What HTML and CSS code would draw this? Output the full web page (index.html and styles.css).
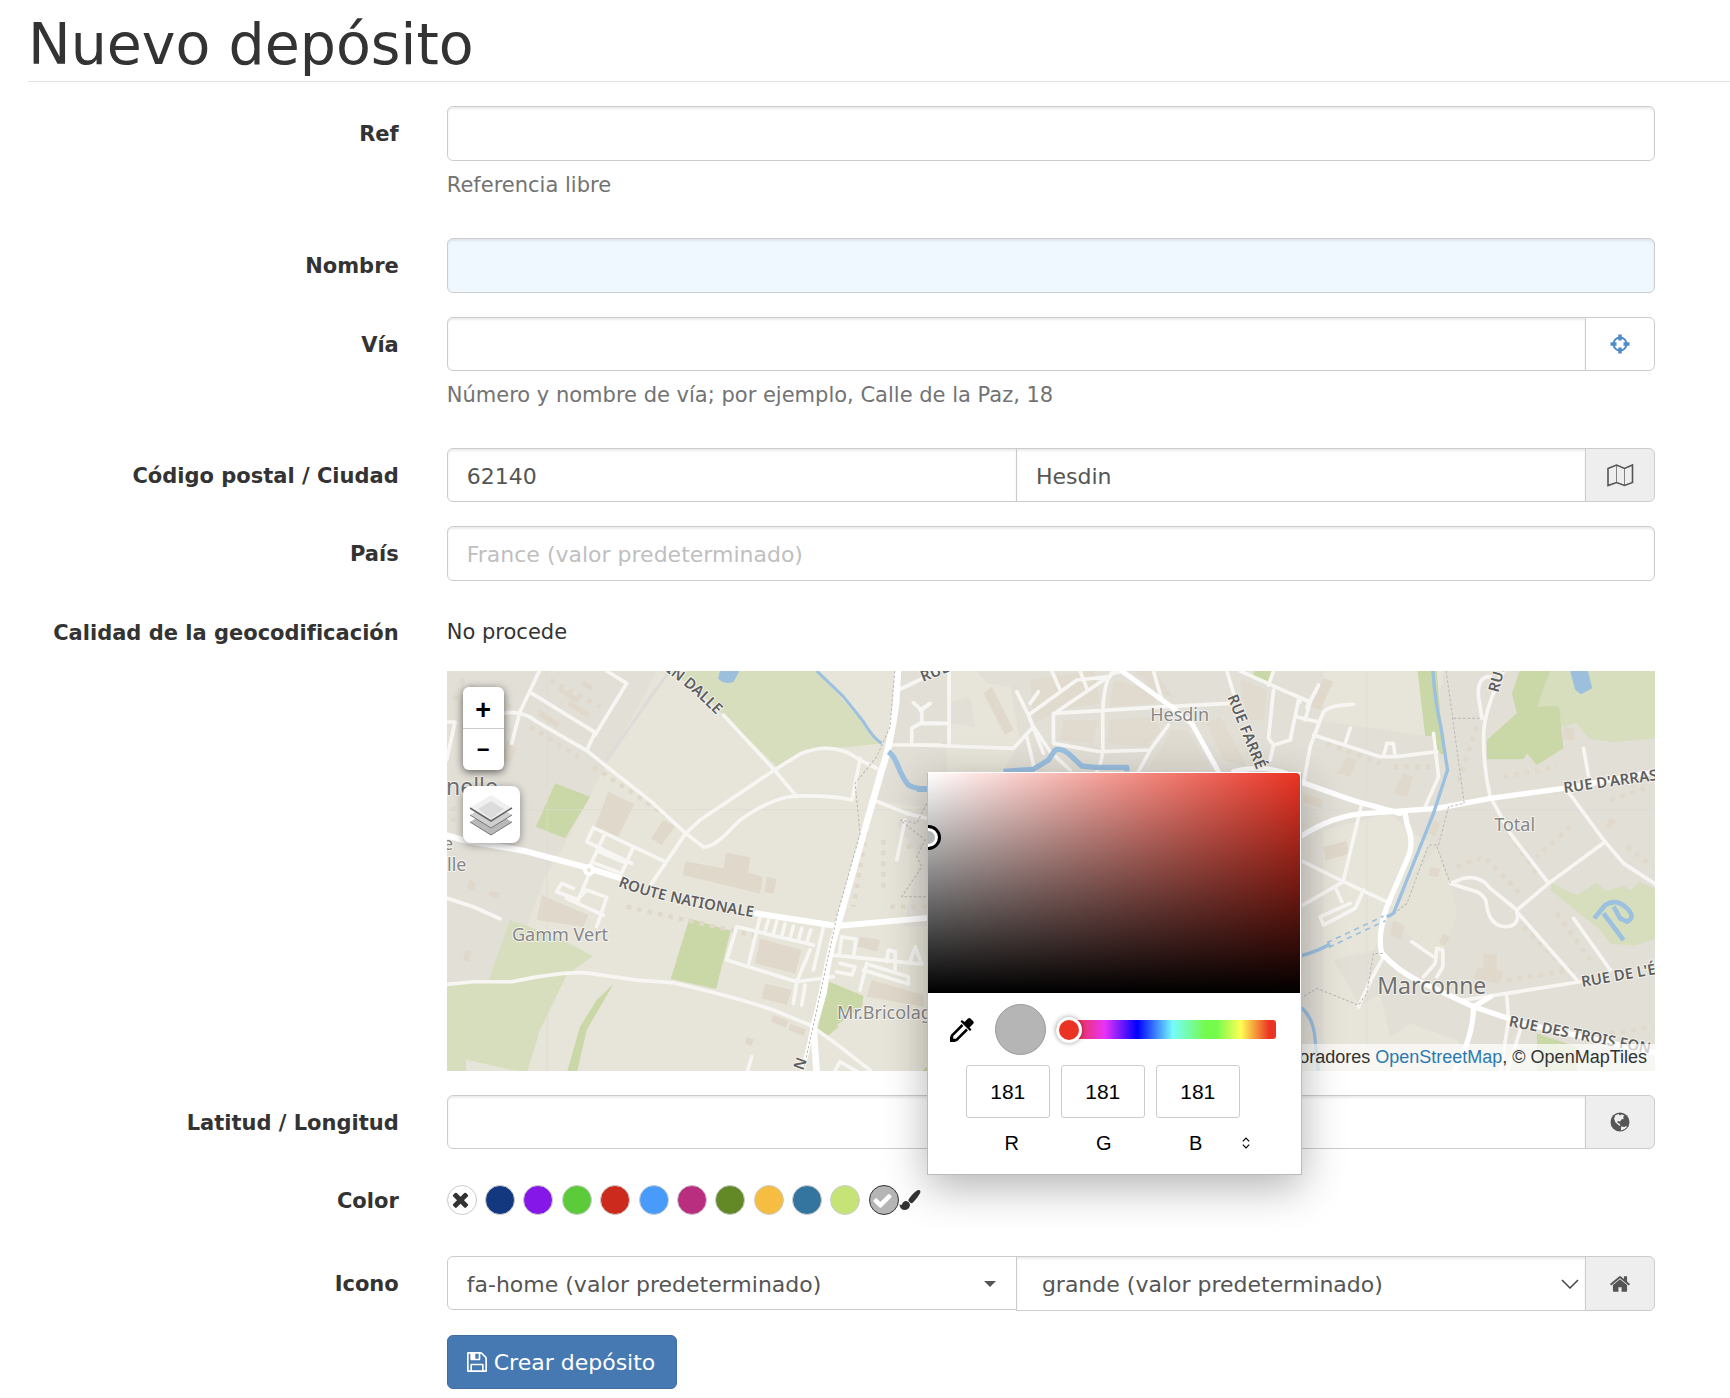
FILE: index.html
```html
<!DOCTYPE html>
<html lang="es">
<head>
<meta charset="utf-8">
<meta name="viewport" content="width=device-width, initial-scale=1">
<title>Nuevo depósito</title>
<link rel="stylesheet" href="styles.css">
</head>
<body>

<h1 class="page-header">Nuevo depósito</h1>

<form class="form">

  <div class="form-group">
    <label class="control-label" for="ref">Ref</label>
    <div class="controls">
      <input type="text" class="form-control" id="ref">
      <p class="help-block">Referencia libre</p>
    </div>
  </div>

  <div class="form-group">
    <label class="control-label" for="name">Nombre</label>
    <div class="controls">
      <input type="text" class="form-control required" id="name">
    </div>
  </div>

  <div class="form-group">
    <label class="control-label" for="street">Vía</label>
    <div class="controls">
      <div class="input-group">
        <input type="text" class="form-control" id="street">
        <button type="button" class="addon addon-button" aria-label="Localizar">
          <svg width="20" height="20" viewBox="0 0 20 20" fill="none" stroke="currentColor">
            <circle cx="10" cy="10" r="6.500" stroke-width="2"/>
            <path d="M10 0.500v6M10 13.500v6M0.500 10h6M13.500 10h6" stroke-width="3.500"/>
          </svg>
        </button>
      </div>
      <p class="help-block">Número y nombre de vía; por ejemplo, Calle de la Paz, 18</p>
    </div>
  </div>

  <div class="form-group">
    <label class="control-label" for="postalcode">Código postal / Ciudad</label>
    <div class="controls">
      <div class="input-group">
        <input type="text" class="form-control" id="postalcode" value="62140">
        <input type="text" class="form-control" id="city" value="Hesdin" aria-label="Ciudad">
        <span class="addon">
          <svg width="28" height="24" viewBox="0 0 28 24" fill="none" stroke="currentColor">
            <path d="M2 5.500L10.500 2L18.500 5.500L26.500 2V19.500L18.500 22.500L10.500 19.500L2 22.500Z" stroke-width="1.600"/>
            <path d="M10.500 2v17.500M18.500 5.500v17" stroke-width="1" opacity=".7"/>
          </svg>
        </span>
      </div>
    </div>
  </div>

  <div class="form-group">
    <label class="control-label" for="country">País</label>
    <div class="controls">
      <input type="text" class="form-control" id="country" placeholder="France (valor predeterminado)">
    </div>
  </div>

  <div class="form-group">
    <span class="control-label">Calidad de la geocodificación</span>
    <div class="controls">
      <p class="form-static">No procede</p>
      <div class="map">
        <svg class="map-canvas" viewBox="0 0 1208 400" preserveAspectRatio="xMinYMin slice">
          <rect width="1208" height="400" fill="#e7e5d9"/>

          <!-- west -->
          <g transform="translate(-7 -11) scale(.33333)">
            <path class="town" d="M0 0H670L500 310L440 430L370 560L320 640L260 800L210 790L145 965L0 970Z"/>
            <path class="town" d="M1380 0H1520V800H1390L1440 600L1370 490L1440 440L1300 420L1340 260Z"/>
            <path class="park" d="M690 33H1128L1200 110L1270 190L1325 250L1220 262Q1110 262 1010 320L860 175Q790 100 690 33Z"/>
            <path class="park" d="M210 780L350 830L458 888L380 945L300 1110L260 1240L78 1198V1240H0V975L145 965Z"/>
            <path class="field" d="M345 370L450 410L375 535L288 500Z"/>
            <path class="field" d="M748 775L872 812L828 987L692 957Z"/>
            <path class="field" d="M1168 965L1270 1008L1266 1040L1190 1095L1196 1100L1160 1130L1132 1110Z"/>
            <path class="field" d="M520 972L440 1110L410 1240H380L420 1100L470 1020Z"/>
            <path class="field" d="M1445 1235L1500 1180V1240H1445Z"/>
            <g class="building">
              <path d="M505 395L582 432L535 530L465 500Z"/>
              <path d="M735 604L850 625L858 578L930 592L925 638L968 650L960 700L728 645Z"/>
              <path d="M980 650l30 8l-10 44l-26-6Z"/>
              <path d="M305 705L445 765L430 800L290 780Z"/>
              <path d="M960 835L1085 870L1065 940L945 910Z"/>
              <path d="M975 970L1055 990L1040 1035L965 1015Z"/>
              <path d="M1295 960L1450 1005V1040L1280 1010Z"/>
              <path d="M1260 830l60 10l-8 34l-60-14ZM670 480l35 18l-40 58l-32-22Z"/>
              <path d="M90 660l20 10l-10 20l-20-8ZM150 692l30 6l-6 16l-28-6ZM920 1130l22 8l-8 20l-18-8ZM1000 1065l45 18l-8 20l-45-18ZM1050 1090l48 18l-8 20l-45-18ZM75 870l18 4l-6 30l-18-4Z"/>
              <path d="M200 240l30 30l-20 40l-25-10ZM390 120l60 40l-8 14l-60-38ZM300 150l60 40l-8 14l-60-38ZM360 80l60 36l-8 14l-60-36ZM430 60l30 18l-8 14l-30-18Z"/>
            </g>
            <path class="building-row" d="M60 60L230 150M40 110L210 210M330 60L480 140M270 200L430 300M460 320L700 480M40 440V500M330 590L420 620M560 740L960 830M1290 450L1240 740M1330 540V700M1400 560H1480M1350 740H1460"/>
            <path class="grid" d="M322 33V1240M21 449H1470"/>
            <g class="road minor">
              <path d="M298 33L240 155L215 250M272 98L465 217L440 272M500 33L560 70L465 225M0 186H45L20 300M190 160Q250 150 290 185L440 272L520 335L640 430L737 520L790 560Q810 565 850 530L900 480Q1000 410 1070 408Q1170 405 1236 420L1260 295"/>
              <path d="M850 165L1003 330L1070 410M737 520L780 480L1003 330L1080 282Q1180 240 1260 300L1310 325M737 520L635 670M1300 420L1400 460L1480 480"/>
              <path d="M440 545L460 503L580 560L675 605M495 520L440 640M440 545L575 610M478 575L560 610M580 560L545 640L465 610"/>
              <path d="M448 640L415 720L350 695L365 670L400 685M415 715L440 690L500 712L470 800M380 715L490 765"/>
              <path d="M0 708L100 740L180 776M0 975L100 965L215 965Q390 930 450 940L590 960L700 968Q900 1015 1000 1050L1110 1095L1200 1160L1290 1230M920 1240L935 1190"/>
              <path d="M890 800L860 900L1070 965L1110 870M960 770L925 915M890 800L1120 855M1150 800L1120 930M985 780L975 815M1010 785L1000 820M1035 790L1025 828M1060 798L1050 835M1085 805L1075 840M1112 810L1100 848M1070 965L1060 1030M1095 975L1085 1035M1070 965L1180 950"/>
              <path d="M1180 885L1445 912L1425 860L1410 905M1205 830L1248 838L1240 890M1205 830L1198 880M1340 905L1345 870L1365 875V930M1280 910L1260 990M1270 930L1405 972V950L1290 915M1200 910L1245 920L1235 945L1190 935M1180 1240L1200 1205L1260 1240"/>
              <path d="M1375 90L1500 30M1340 255H1500M1415 245V205L1440 190H1500M1445 190V150L1420 128M1445 150L1470 130M1395 480L1370 600"/>
            </g>
            <path class="road main" d="M0 520L70 540L250 572L430 620L560 660M950 760L1190 798L1480 772" stroke-width="18"/>
            <circle cx="447" cy="630" r="12" fill="#e7e5d9" stroke="#fff" stroke-width="12"/>
            <path class="road main" d="M1374 20L1368 130Q1350 260 1325 330L1265 540L1195 790Q1160 900 1150 1000L1120 1100L1130 1240" stroke-width="20"/>
            <path class="road main" d="M1190 810L1150 960L1105 1160L1085 1240" stroke-width="12"/>
            <path class="rail" d="M1364 33L1350 200L1310 290L1245 370L1260 520L1190 770L1130 1050L1090 1230M1460 430L1430 490L1380 480L1455 540L1430 590L1445 620L1385 710H1460"/>
            <path class="rail light" d="M690 33L640 100L500 300"/>
            <path class="water" d="M840 33H898L880 66Q850 75 834 55Z"/>
            <path class="river" d="M1130 33L1210 110L1270 185Q1300 235 1325 250" stroke-width="9"/>
            <path class="river" d="M1345 275Q1360 285 1370 310Q1390 360 1405 375Q1430 390 1470 385" stroke-width="16"/>
          </g>

          <!-- town centre, mostly under the colour picker -->
          <g transform="translate(473 -11) scale(.33333)">
            <path class="town" d="M170 33H1210V1240H1146V700L250 330L300 250L270 80L200 70Z"/>
            <path class="town" d="M80 130L150 110L165 200L90 190Z"/>
            <g class="building">
              <path d="M190 100L215 80L280 210L255 225Z"/>
              <path d="M330 60L520 33L540 130L420 150L340 190Z" opacity=".7"/>
              <path d="M430 180L530 180L520 250L420 240Z" opacity=".7"/>
              <path d="M580 60L720 100L700 130L570 140Z" opacity=".7"/>
              <path d="M570 180L700 170L720 210L680 260L560 250Z" opacity=".7"/>
              <path d="M750 210L800 210L870 320H690Z" opacity=".6"/>
              <path d="M640 33H700L760 110L710 100ZM860 190L900 170L980 320L910 300Z" opacity=".7"/>
              <path d="M960 60L1040 90L1030 180L980 180Z" opacity=".7"/>
            </g>
            <path class="field" d="M1005 33H1060L1045 72L995 50Z"/>
            <g class="road minor">
              <path d="M87 33V255M0 255L280 265L340 200L390 275L450 330M290 95L325 165L370 280M325 165L470 60L570 50M330 130L355 95M395 33L420 90M480 33L500 85M410 155L580 40L610 33M580 33Q550 60 548 160V270Q545 310 530 335M400 165V250L540 275L690 270L745 195M400 160L740 140L930 130M700 33L725 120M690 270L655 335M345 335L320 230"/>
              <path d="M920 33L940 100M960 33L1165 125L1150 190M1060 33L1045 75M1060 90L1045 235L1060 255L1110 240L1140 120M1130 170L1195 185M1195 80L1165 130M1050 300L1060 255M0 150L30 130M0 190H80"/>
            </g>
            <path class="road main" d="M605 33L760 145L815 190L895 335M940 335Q1040 310 1120 350L1210 380" stroke-width="15"/>
            <path class="river" d="M-10 388H30M250 334L340 328L385 300L405 270Q425 262 450 285L485 318L525 322H620V334" stroke-width="16"/>
          </g>

          <!-- east -->
          <g transform="translate(843 -11) scale(.33333)">
            <path class="town" d="M0 100L80 180L430 230L460 33H1100V1240H560L500 1140L360 1090L300 1130L270 1000L210 1040L130 900L250 870L300 770L420 550L345 500L300 460L30 530Z"/>
            <path class="park" d="M780 33H1100V235L970 246L895 236L860 190L815 200L740 140Z"/>
            <path class="field" d="M688 33H780L740 140L800 138Q812 145 810 180L820 265L740 315L710 280L700 298H590V240L680 160L665 100Z"/>
            <path class="field" d="M382 33H440L460 285L430 270L425 228H405Z"/>
            <path class="park" d="M785 670L860 705L920 668L945 692L1000 678L1020 690L1050 665L1100 690V835L1035 856L960 850L930 810L780 690Z"/>
            <path class="field" d="M740 1120L860 1160V1240H740Z"/>
            <path class="open" d="M440 560L480 680L500 760L450 900L400 860L300 780L380 640Z"/>
            <g class="building">
              <path d="M580 882L620 884V930L640 935L628 970L550 955L560 925L580 920Z"/>
              <path d="M310 780L345 800L330 840L300 822ZM460 820l18 10l-14 28l-18-10Z"/>
              <path d="M100 55L130 65L90 150L62 140Z"/>
              <path d="M820 200L852 205L850 240L820 238Z"/>
              <path d="M340 340L370 350L350 410L310 400ZM170 290L200 300L180 350L140 340Z"/>
              <path d="M430 480L450 490L435 530L415 520ZM960 475l18 8l-18 24l-14-8Z"/>
              <path d="M100 560l70-18l6 40l-70 20ZM420 620l30 6l-8 26l-28-6ZM40 400l60 20l-6 24l-58-20Z"/>
            </g>
            <path class="building-row" d="M110 250L270 310M310 320H420M640 350L800 320M500 620L580 590L700 710M620 470L740 640M840 500L740 590M700 800L830 930M800 760L900 900M650 960L850 930M640 1150L700 1200M1010 560L1090 620M560 200L500 380M960 420L1080 380M960 1120L1090 1100"/>
            <path class="grid" d="M230 33V1240M37 449H1100"/>
            <g class="road minor">
              <path d="M0 100L60 125L85 75M25 120L0 240M60 125L45 180M20 170L80 185M190 133Q120 135 100 155L60 260L40 370M70 225L270 290H320L440 275M180 205L165 250M280 290L290 250H310L315 290M430 220L445 350L405 440"/>
              <path d="M640 33Q580 150 580 230Q580 330 600 410L660 520L775 670M600 50Q560 50 565 110L575 175M880 265L895 350M830 390L940 540L1000 610L1100 675M945 545L775 670L680 750L600 685Q570 645 520 655L480 670L560 695Q590 710 590 740Q600 800 650 800Q690 795 680 755L860 960M850 775L960 930"/>
              <path d="M215 430L160 660M30 600L160 665L300 730M30 740L160 665M135 680L155 725M220 690L195 745L100 795L90 770L180 730M365 845L430 890M400 950L435 910L440 865L458 870V920L440 950M280 890Q240 960 205 1040M870 965L650 1000L520 1020M650 1010L655 1080L630 1240M690 1110L650 1240"/>
            </g>
            <path class="road main" d="M30 530Q130 465 230 460L440 445L600 415L820 385L1100 335M30 365L200 425L330 460M345 460L350 490Q375 550 350 600L290 740Q260 830 275 880Q320 930 380 960L550 1040L700 1090L1100 1180M550 1040Q550 1130 490 1240M550 1040L600 1010" stroke-width="16"/>
            <path class="rail" d="M468 33L522 430L475 440L445 555H415L350 730L300 770M440 560L480 670M278 880H250L230 1000L205 1035L80 985L30 1015M490 175H575"/>
            <path class="river" d="M428 33Q435 130 452 200L472 330L430 460L310 760L290 770" stroke-width="10"/>
            <path class="river" d="M110 848L280 768M116 862L286 782" stroke-width="5" stroke-dasharray="16 14"/>
            <path class="river" d="M30 888Q80 875 120 852M30 1040Q70 1070 75 1140L85 1240" stroke-width="10"/>
            <path class="water" d="M840 33H893L906 85L873 103L855 90Z"/>
            <path class="river" d="M912 775L945 735Q975 715 1005 740Q1040 770 1010 785L990 775L970 740M940 760L1000 840" stroke-width="14"/>
          </g>

          <!-- labels -->
          <g class="map-label street">
            <path id="dalle" d="M207 -7Q245 16 282 58" fill="none" stroke="none"/>
            <text><textPath href="#dalle">MIN DALLE</textPath></text>
            <path id="nationale" d="M171 215Q210 232 325 249" fill="none" stroke="none"/>
            <text><textPath href="#nationale">ROUTE NATIONALE</textPath></text>
            <text transform="translate(476 11) rotate(-22)">RUE</text>
            <text transform="translate(780 26) rotate(68)">RUE FARRÉ</text>
            <text transform="translate(1051 22) rotate(-75)">RUE</text>
            <text transform="translate(1117 122) rotate(-8)">RUE D'ARRAS</text>
            <text transform="translate(1135 316) rotate(-10)">RUE DE L'É</text>
            <text transform="translate(1061 355) rotate(11)">RUE DES TROIS FON</text>
            <text transform="translate(356 400) rotate(-70)">N</text>
          </g>
          <g class="map-label">
            <text x="703" y="50">Hesdin</text>
            <text x="65" y="270">Gamm Vert</text>
            <text x="390" y="348">Mr.Bricolage</text>
            <text x="1047" y="160">Total</text>
            <text x="-4" y="179">e</text>
            <text x="0" y="200">lle</text>
          </g>
          <g class="map-label place">
            <text x="930" y="323">Marconne</text>
            <text x="-1" y="124">nelle</text>
          </g>
        </svg>

        <div class="zoom-control">
          <button type="button" aria-label="Acercar">+</button>
          <button type="button" aria-label="Alejar">−</button>
        </div>
        <button type="button" class="layers-control" aria-label="Capas">
          <svg width="44" height="42" viewBox="0 0 44 42">
            <path d="M1 28L22 15L43 28L22 41Z" fill="#b9b9b9"/>
            <path d="M1 28L22 41L43 28" fill="none" stroke="#777"/>
            <path d="M1 21L22 8L43 21L22 34Z" fill="#cfcfcf"/>
            <path d="M1 21L22 34L43 21" fill="none" stroke="#777"/>
            <path d="M1 14L22 1L43 14L22 27Z" fill="#f0f0f0"/>
            <path d="M9 15L22 7L35 15L22 25Z" fill="#dcdcdc"/>
            <path d="M1 14L22 27L43 14" fill="none" stroke="#666" stroke-width="1.500"/>
          </svg>
        </button>
        <div class="attribution">© Colaboradores <a href="#">OpenStreetMap</a>, © OpenMapTiles</div>
      </div>
    </div>
  </div>

  <div class="form-group">
    <label class="control-label" for="latlng">Latitud / Longitud</label>
    <div class="controls">
      <div class="input-group">
        <input type="text" class="form-control" id="latlng">
        <span class="addon">
          <svg width="20" height="20" viewBox="0 0 20 20">
            <circle cx="10" cy="10" r="9.500" fill="currentColor"/>
            <path d="M5.500 3L9 2L9.500 3.500L12 2.500L14.500 3.500L13 5L14 6.500L11.500 7.500L10 9.500L7.500 9L7.500 11L9.500 11.500L10.500 14L9 13.500L5.500 10.500L4 6.500Z" fill="#eee"/>
            <path d="M11 14.500L14.500 15L16 14L17 15Q14.500 18 11 18.500Z" fill="#eee"/>
          </svg>
        </span>
      </div>
    </div>
  </div>

  <div class="form-group">
    <span class="control-label">Color</span>
    <div class="controls colors">
      <div class="swatches">
        <span class="swatch">
          <input type="radio" name="color" aria-label="Ninguno" style="background:#fff">
          <svg class="none" width="23" height="23" viewBox="0 0 1792 1792"><path fill="#333" d="M1490 1322q0 40-28 68l-136 136q-28 28-68 28t-68-28l-294-294-294 294q-28 28-68 28t-68-28l-136-136q-28-28-28-68t28-68l294-294-294-294q-28-28-28-68t28-68l136-136q28-28 68-28t68 28l294 294 294-294q28-28 68-28t68 28l136 136q28 28 28 68t-28 68l-294 294 294 294q28 28 28 68z"/></svg>
        </span>
        <span class="swatch"><input type="radio" name="color" aria-label="Azul marino" style="background:#14387f"></span>
        <span class="swatch"><input type="radio" name="color" aria-label="Violeta" style="background:#8518e8"></span>
        <span class="swatch"><input type="radio" name="color" aria-label="Verde" style="background:#5bcb3a"></span>
        <span class="swatch"><input type="radio" name="color" aria-label="Rojo" style="background:#cb2a1c"></span>
        <span class="swatch"><input type="radio" name="color" aria-label="Azul" style="background:#489bfb"></span>
        <span class="swatch"><input type="radio" name="color" aria-label="Rosa" style="background:#ba2e80"></span>
        <span class="swatch"><input type="radio" name="color" aria-label="Oliva" style="background:#628926"></span>
        <span class="swatch"><input type="radio" name="color" aria-label="Naranja" style="background:#f5bd41"></span>
        <span class="swatch"><input type="radio" name="color" aria-label="Petróleo" style="background:#33759f"></span>
        <span class="swatch"><input type="radio" name="color" aria-label="Lima" style="background:#c6e377"></span>
        <span class="swatch">
          <input type="radio" name="color" aria-label="Personalizado" style="background:#b5b5b5" checked>
          <svg width="21" height="21" viewBox="0 0 1792 1792"><path fill="#fff" d="M1671 566q0 40-28 68l-724 724-136 136q-28 28-68 28t-68-28l-136-136-362-362q-28-28-28-68t28-68l136-136q28-28 68-28t68 28l294 295 656-657q28-28 68-28t68 28l136 136q28 28 28 68z"/></svg>
        </span>
      </div>
      <button type="button" class="brush" aria-label="Elegir un color">
        <svg width="22" height="22" viewBox="0 0 22 22" fill="#333">
          <path d="M19 1Q21.500 0.500 21.500 3Q20 7 14 13.500Q12.500 15 11 13.500L9.500 12Q9 10.500 10.500 9Q15 3 19 1Z"/>
          <path d="M7 12Q10.500 12.500 11 16Q10.500 20.500 6 21Q1 21 0.500 15Q2 16.500 3 15.500Q4 12 7 12Z"/>
        </svg>
      </button>

      <div class="picker">
        <div class="picker-area"><span class="picker-cursor"></span></div>
        <div class="picker-row">
          <button type="button" class="dropper" aria-label="Cuentagotas">
            <svg width="24" height="24" viewBox="0 0 24 24">
              <path d="M18 0.500Q19.500 -0.500 21 1L23 3Q24.500 4.500 23 6L19.500 9.500L21.500 11.500L20 13L10.500 3.500L12 2L14.500 4Z"/>
              <path d="M12.500 7L2 17.500V22H6.500L17 11.500" fill="none" stroke="#000" stroke-width="2.500"/>
              <path d="M0 18L6 24H0Z"/>
            </svg>
          </button>
          <span class="preview"></span>
          <input type="range" class="hue" min="0" max="360" value="0" aria-label="Tono">
        </div>
        <div class="rgb-values">
          <input type="text" id="r" value="181">
          <input type="text" id="g" value="181">
          <input type="text" id="b" value="181">
        </div>
        <div class="rgb-labels">
          <label for="r">R</label>
          <label for="g">G</label>
          <label for="b">B</label>
          <button type="button" class="format" aria-label="Cambiar formato">
            <svg width="8" height="12" viewBox="0 0 10 14" fill="none" stroke="#000" stroke-width="1.500"><path d="M1 5L5 1L9 5M1 9L5 13L9 9"/></svg>
          </button>
        </div>
      </div>
    </div>
  </div>

  <div class="form-group">
    <label class="control-label" for="icon">Icono</label>
    <div class="controls">
      <div class="input-group">
        <div class="select-wrap">
          <select class="form-control flat" id="icon">
            <option>fa-home (valor predeterminado)</option>
          </select>
          <svg class="caret" width="12" height="6" viewBox="0 0 12 6"><path d="M0 0h12L6 6Z" fill="#555"/></svg>
        </div>
        <div class="select-wrap">
          <select class="form-control size" id="size" aria-label="Tamaño">
            <option>grande (valor predeterminado)</option>
          </select>
          <svg class="chevron" width="18" height="10" viewBox="0 0 18 10"><path d="M1 1l8 8l8-8" fill="none" stroke="#444" stroke-width="1.500"/></svg>
        </div>
        <span class="addon">
          <svg width="22" height="22" viewBox="0 0 1792 1792"><path fill="currentColor" d="M1472 992v480q0 26-19 45t-45 19h-384v-384h-256v384h-384q-26 0-45-19t-19-45v-480q0-1 .5-3t.5-3l575-474 575 474q1 2 1 6zm223-69l-62 74q-8 9-21 11h-3q-13 0-21-7l-692-577-692 577q-12 8-24 7-13-2-21-11l-62-74q-8-10-7-23.5t11-21.5l719-599q32-26 76-26t76 26l244 204v-195q0-14 9-23t23-9h192q14 0 23 9t9 23v408l219 182q10 8 11 21.5t-7 23.5z"/></svg>
        </span>
      </div>
    </div>
  </div>

  <div class="form-group">
    <div class="controls offset">
      <button type="submit" class="btn-primary">
        <svg width="20" height="20" viewBox="128 128 1536 1536"><path fill="currentColor" d="M512 1536h768v-384h-768v384zm896 0h128v-896q0-14-10-38.5t-20-34.5l-281-281q-10-10-34-20t-39-10v416q0 40-28 68t-68 28h-576q-40 0-68-28t-28-68v-416h-128v1280h128v-416q0-40 28-68t68-28h832q40 0 68 28t28 68v416zm-384-928v-320q0-13-9.5-22.5t-22.5-9.5h-192q-13 0-22.5 9.5t-9.5 22.5v320q0 13 9.5 22.5t22.5 9.5h192q13 0 22.5-9.5t9.5-22.5zm640 32v928q0 40-28 68t-68 28h-1344q-40 0-68-28t-28-68v-1344q0-40 28-68t68-28h928q40 0 88 20t76 48l280 280q28 28 48 76t20 88z"/></svg>
        Crear depósito
      </button>
    </div>
  </div>

</form>

</body>
</html>
```
FILE: styles.css
```css
* {
  box-sizing: border-box;
}

body {
  margin: 0;
  background: #fff;
  color: #333;
  font-family: Verdana, "DejaVu Sans", sans-serif;
  font-size: 21px;
  line-height: 30px;
}

button, input, select {
  font-family: inherit;
}

.page-header {
  margin: 0 0 24px 28px;
  padding: 12px 0 5px;
  border-bottom: 1px solid #e4e4e4;
  font-size: 57px;
  font-weight: normal;
  line-height: 64px;
}

.form {
  padding: 0 51px 0 4px;
}

.form-group {
  display: grid;
  grid-template-columns: 1fr 3fr;
  margin-bottom: 24px;
}

.control-label {
  padding: 13px 24px 0 0;
  font-weight: bold;
  text-align: right;
}

.controls {
  min-width: 0;
  padding: 0 24px;
}

.controls.offset {
  grid-column: 2;
}

.form-control {
  display: block;
  width: 100%;
  height: 55px;
  padding: 2px 19px 0;
  border: 1px solid #ccc;
  border-radius: 6px;
  background: #fff;
  box-shadow: inset 0 2px 2px rgba(0, 0, 0, .075);
  color: #555;
  font-size: 22px;
}

.form-control::placeholder {
  color: #bfbfbf;
}

.required {
  background: aliceblue;
}

.help-block {
  margin: 9px 0 14px;
  color: #737373;
}

.form-static {
  margin: 0;
  padding: 12px 0 24px;
}

.input-group {
  display: flex;
}

.input-group > * {
  flex: 1;
  margin-right: -1px;
}

.input-group > :last-child {
  margin-right: 0;
}

.input-group > .form-control {
  min-width: 0;
  height: 54px;
  border-radius: 0;
}

.input-group > .form-control:first-child {
  border-radius: 6px 0 0 6px;
}

.addon {
  display: flex;
  flex: 0 0 70px;
  align-items: center;
  justify-content: center;
  padding: 0;
  border: 1px solid #ccc;
  border-radius: 0 6px 6px 0;
  background: #eee;
  color: #555;
}

.addon-button {
  background: #fff;
  color: #4f8bcb;
}

/* map */
.map {
  position: relative;
  height: 400px;
  overflow: hidden;
}

.map-canvas {
  display: block;
  width: 100%;
  height: 100%;
}

.town { fill: #e2dfd7; }
.open { fill: #e5e2d6; }
.park { fill: #d6debd; }
.field { fill: #cad7a7; }
.building { fill: #e0d9cb; }
.water { fill: #9dbfde; }

.building-row {
  fill: none;
  stroke: #e0d9cb;
  stroke-width: 14;
  stroke-dasharray: 14 18;
}

.grid {
  fill: none;
  stroke: #dddbd4;
  stroke-width: 2;
}

.road {
  fill: none;
  stroke-linecap: round;
  stroke-linejoin: round;
}

.minor {
  stroke: #f7f6f3;
  stroke-width: 11;
}

.main {
  stroke: #fff;
}

.river {
  fill: none;
  stroke: #9bc0e0;
  stroke-linejoin: round;
}

.rail {
  fill: none;
  stroke: #b9b7b3;
  stroke-width: 3;
  stroke-dasharray: 8 6;
}

.rail.light {
  stroke: #dedbd8;
  stroke-width: 10;
  stroke-dasharray: none;
}

.map-label {
  fill: #868686;
  stroke: #f4f3ee;
  stroke-width: 2px;
  stroke-linejoin: round;
  paint-order: stroke;
  font-family: "Noto Sans", sans-serif;
  font-size: 18px;
}

.map-label.street {
  fill: #5f5f5f;
  font-size: 15px;
  font-weight: 600;
}

.map-label.place {
  fill: #707070;
  font-size: 23px;
}

.zoom-control {
  position: absolute;
  top: 16px;
  left: 16px;
  width: 41px;
  border-radius: 6px;
  background: #fff;
  box-shadow: 0 2px 8px rgba(0, 0, 0, .6);
}

.zoom-control button {
  display: block;
  width: 100%;
  height: 41px;
  padding: 4px 0 0;
  border: 0;
  background: none;
  color: #000;
  font: bold 27px/36px "Liberation Sans", Arial, sans-serif;
}

.zoom-control button + button {
  height: 42px;
  padding-top: 0;
  border-top: 1px solid #ccc;
  font-size: 22px;
}

.layers-control {
  position: absolute;
  top: 115px;
  left: 16px;
  display: flex;
  align-items: center;
  justify-content: center;
  width: 57px;
  height: 57px;
  padding: 0;
  border: 0;
  border-radius: 8px;
  background: #fff;
  box-shadow: 0 2px 8px rgba(0, 0, 0, .4);
}

.attribution {
  position: absolute;
  right: 0;
  bottom: 0;
  padding: 0 8px;
  background: rgba(255, 255, 255, .7);
  font: 18px/27px "Liberation Sans", Arial, sans-serif;
}

.attribution a {
  color: #2a7ab0;
  text-decoration: none;
}

/* colors */
.colors {
  position: relative;
  display: flex;
  align-items: center;
  height: 59px;
  padding-bottom: 6px;
}

.swatches {
  display: flex;
  justify-content: space-between;
  width: 452px;
}

.swatch {
  position: relative;
  width: 30px;
  height: 30px;
}

.swatch input {
  display: block;
  width: 30px;
  height: 30px;
  margin: 0;
  border: 1px solid #ccc;
  border-radius: 50%;
  appearance: none;
}

.swatch input:checked {
  border-color: #333;
}

.swatch svg {
  position: absolute;
  top: 5px;
  left: 3px;
  pointer-events: none;
}

.swatch .none {
  top: 3px;
  left: 2px;
}

.brush {
  display: flex;
  padding: 0;
  border: 0;
  background: none;
}

.picker {
  position: absolute;
  bottom: 57px;
  left: 504px;
  z-index: 10;
  width: 375px;
  height: 403px;
  border: 1px solid #bbb;
  border-top-color: #fff;
  background: #fff;
  box-shadow: 0 12px 40px rgba(0, 0, 0, .3);
  font-family: "Liberation Sans", Arial, sans-serif;
  color: #000;
}

.picker-area {
  position: relative;
  height: 220px;
  margin-right: 1px;
  overflow: hidden;
  border-top-right-radius: 4px;
  background:
    linear-gradient(to top, #000, transparent),
    linear-gradient(to right, #fff, #eb3323);
}

.picker-cursor {
  position: absolute;
  top: 52px;
  left: -12px;
  width: 25px;
  height: 25px;
  border: 3px solid #000;
  border-radius: 50%;
  background: #b5b5b5;
  box-shadow: inset 0 0 0 3px #fff;
}

.picker-row {
  display: flex;
  align-items: center;
  padding: 11px 25px 10px 22px;
}

.dropper {
  display: flex;
  padding: 0;
  border: 0;
  background: none;
}

.preview {
  width: 51px;
  height: 51px;
  margin: 0 10px 0 21px;
  border: 1px solid #999;
  border-radius: 50%;
  background: #b5b5b5;
}

.hue {
  flex: 1;
  min-width: 0;
  height: 19px;
  margin: 0;
  border-radius: 12px 4px 4px 12px;
  background: linear-gradient(to right, #eb3323 6%, #ea33f7 22%, #0000ff 37%, #75fbfd 53%, #75fb4c 68%, #75fb4c 73%, #ffff54 84%, #eb3323 97%);
  appearance: none;
}

.hue::-webkit-slider-thumb {
  width: 26px;
  height: 26px;
  border: 3px solid #fff;
  border-radius: 50%;
  background: #eb3323;
  box-shadow: 0 0 5px rgba(0, 0, 0, .4);
  appearance: none;
}

.rgb-values {
  display: flex;
  gap: 11px;
  padding-left: 38px;
}

.rgb-values input {
  width: 84px;
  height: 53px;
  padding: 0;
  border: 1px solid #ccc;
  border-radius: 3px;
  color: #000;
  font-size: 21px;
  text-align: center;
}

.rgb-labels {
  display: flex;
  align-items: center;
  padding: 10px 0 0 38px;
  font-size: 20px;
}

.rgb-labels label {
  width: 92px;
  text-align: center;
}

.format {
  display: flex;
  padding: 0;
  border: 0;
  background: none;
}

/* selects */
.select-wrap {
  position: relative;
}

.select-wrap select {
  appearance: none;
}

.select-wrap .flat {
  height: 54px;
  border-radius: 6px 0 0 6px;
  box-shadow: none;
}

.select-wrap .size {
  padding-left: 25px;
  border-radius: 0;
}

.caret {
  position: absolute;
  top: 25px;
  right: 21px;
}

.chevron {
  position: absolute;
  top: 23px;
  right: 7px;
}

.btn-primary {
  display: flex;
  align-items: center;
  gap: 7px;
  height: 54px;
  padding: 0 21px 0 19px;
  border: 1px solid #3f6ea5;
  border-radius: 6px;
  background: #4679b2;
  color: #fff;
  font-size: 22px;
}
```
